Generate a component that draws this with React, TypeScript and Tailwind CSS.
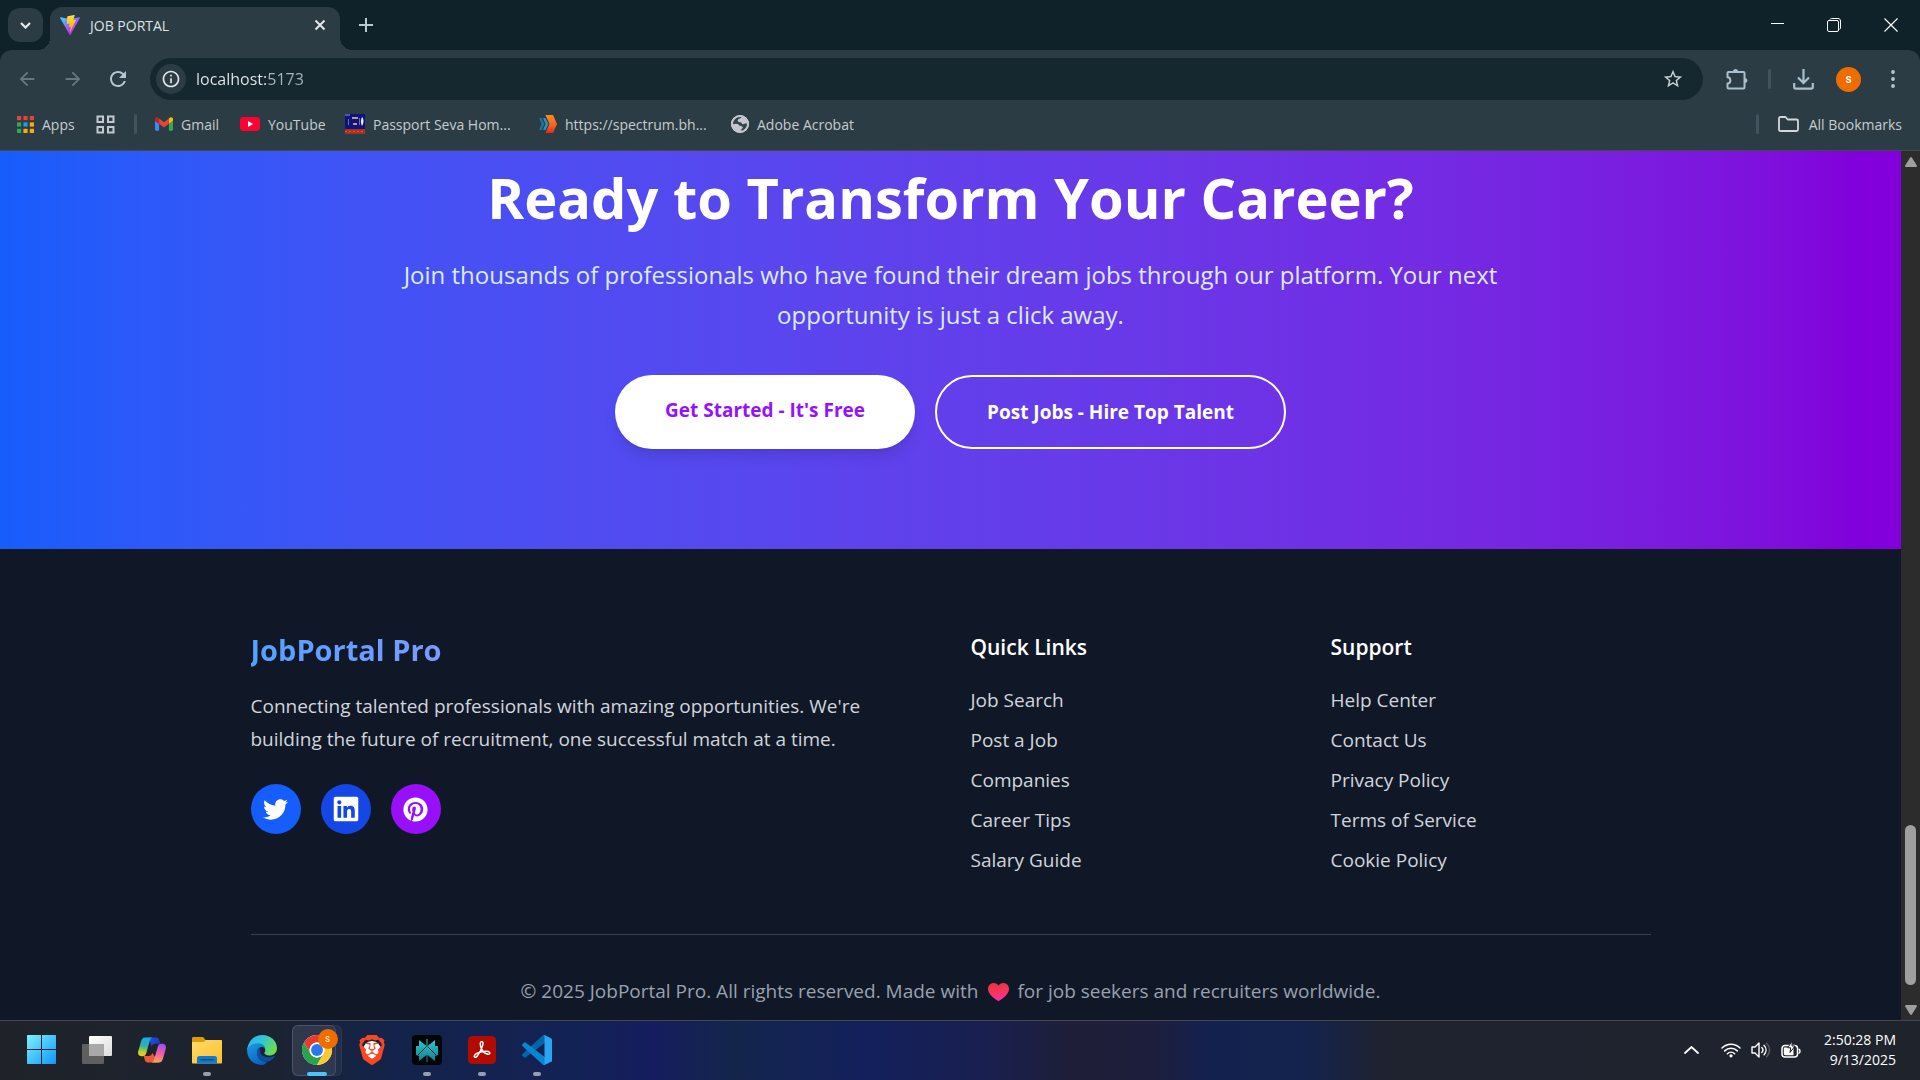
import type { ReactNode } from "react";
import { FaTwitter, FaLinkedin, FaPinterest } from "react-icons/fa";
import { MdArrowBack, MdArrowForward, MdRefresh, MdOutlineInfo, MdStarBorder } from "react-icons/md";
import { SiBrave } from "react-icons/si";

/* ---------- Browser icons ---------- */

function ViteLogo() {
  return (
    <svg className="size-5" viewBox="0 0 256 257" aria-hidden="true">
      <defs>
        <linearGradient id="viteA" x1="-.828%" x2="57.636%" y1="7.652%" y2="78.411%">
          <stop offset="0%" stopColor="#41D1FF" />
          <stop offset="100%" stopColor="#BD34FE" />
        </linearGradient>
        <linearGradient id="viteB" x1="43.376%" x2="50.316%" y1="2.242%" y2="89.03%">
          <stop offset="0%" stopColor="#FFEA83" />
          <stop offset="8.333%" stopColor="#FFDD35" />
          <stop offset="100%" stopColor="#FFA800" />
        </linearGradient>
      </defs>
      <path fill="url(#viteA)" d="M255.153 37.938L134.897 252.976c-2.483 4.44-8.862 4.466-11.382.048L.875 37.958c-2.746-4.814 1.371-10.646 6.827-9.67l120.385 21.517a6.537 6.537 0 0 0 2.322-.004l117.867-21.483c5.438-.991 9.574 4.796 6.877 9.62Z" />
      <path fill="url(#viteB)" d="M185.432.063L96.44 17.501a3.268 3.268 0 0 0-2.634 3.014l-5.474 92.456a3.268 3.268 0 0 0 3.997 3.378l24.777-5.718c2.318-.535 4.413 1.507 3.936 3.838l-7.361 36.047c-.495 2.426 1.782 4.5 4.151 3.78l15.304-4.649c2.372-.72 4.652 1.36 4.15 3.788l-11.698 56.621c-.732 3.542 3.979 5.473 5.943 2.437l1.313-2.028l72.516-144.72c1.215-2.423-.88-5.186-3.54-4.672l-25.505 4.922c-2.396.462-4.435-1.77-3.759-4.114l16.646-57.705c.677-2.35-1.37-4.583-3.769-4.113Z" />
    </svg>
  );
}

function AppsIcon() {
  const colors = ["#ea4335", "#ea4335", "#ea4335", "#34a853", "#1a9cf0", "#fbab05", "#34a853", "#fbab05", "#fbab05"];
  return (
    <svg className="size-[17px]" viewBox="0 0 17 17" aria-hidden="true">
      {colors.map((c, i) => (
        <rect key={i} x={(i % 3) * 6.4} y={Math.floor(i / 3) * 6.4} width="4.2" height="4.2" fill={c} />
      ))}
    </svg>
  );
}

function TabGroupsIcon() {
  return (
    <svg className="size-[19px]" viewBox="0 0 19 19" fill="none" stroke="#c3c9cc" strokeWidth="2" aria-hidden="true">
      <rect x="1.5" y="1.5" width="5.5" height="5.5" />
      <rect x="12" y="1.5" width="5.5" height="5.5" />
      <rect x="1.5" y="12" width="5.5" height="5.5" />
      <rect x="12" y="12" width="5.5" height="5.5" />
    </svg>
  );
}

function GmailIcon() {
  return (
    <svg className="h-[14px] w-[18px]" viewBox="52 42 88 66" aria-hidden="true">
      <path fill="#4285f4" d="M58 108h14V74L52 59v43c0 3.32 2.69 6 6 6" />
      <path fill="#34a853" d="M120 108h14c3.32 0 6-2.69 6-6V59l-20 15" />
      <path fill="#fbbc04" d="M120 48v26l20-15v-8c0-7.42-8.47-11.65-14.4-7.2" />
      <path fill="#ea4335" d="M72 74V48l24 18 24-18v26L96 92" />
      <path fill="#c5221f" d="M52 51v8l20 15V48l-5.6-4.2c-5.94-4.45-14.4-.22-14.4 7.2" />
    </svg>
  );
}

function YouTubeIcon() {
  return (
    <svg className="h-[14px] w-5" viewBox="0 0 20 14" aria-hidden="true">
      <rect width="20" height="14" rx="3.4" fill="#ff0033" />
      <path d="M8 4v6l5-3z" fill="#fff" />
    </svg>
  );
}

function PassportIcon() {
  return (
    <svg className="size-5" viewBox="0 0 20 20" aria-hidden="true">
      <rect width="20" height="15" fill="#12127a" />
      <rect y="15" width="20" height="5" fill="#a8321d" />
      <path d="M0 0h5v2H0z" fill="#4b57a0" />
      <path d="M7 3h6v2H7zM8 9h4v2H8z" fill="#a9a488" />
      <path d="M3 5h1v6H3zM14 4h1v7h-1z" fill="#6a70b8" />
      <path d="M17 3c2 2 2 6 0 9-1.500-3-1.500-6 0-9z" fill="#d8f0fa" />
      <path d="M0 17.500h20" stroke="#d65a35" strokeDasharray="2 2" />
    </svg>
  );
}

function SpectrumIcon() {
  return (
    <svg className="size-[18px]" viewBox="0 0 18 18" aria-hidden="true">
      <defs>
        <linearGradient id="spec" x1="0" y1="0" x2="0" y2="1">
          <stop offset="0" stopColor="#fb8c1d" />
          <stop offset=".6" stopColor="#f9601c" />
          <stop offset="1" stopColor="#e8261d" />
        </linearGradient>
      </defs>
      <path d="M0 3h2.500l3 6-3 6H0l2.500-6z" fill="#1f6f9f" />
      <path d="M4 3h2.500l3 6-3 6H4l2.500-6z" fill="#2a8fc4" />
      <path d="M6.500 0H14l4 9-4 9H6.500l4-9z" fill="url(#spec)" />
    </svg>
  );
}

function GlobeIcon() {
  return (
    <svg className="size-[18px]" viewBox="0 0 18 18" aria-hidden="true">
      <circle cx="9" cy="9" r="9" fill="#c3c7cd" />
      <path d="M10.500 2c-1 2-3.800 1.600-3.800 3.600 0 1.200 1 1.600 2.600 1.700 1.600.1 1.200 2 2.700 2s1.800-1 4-.6c0 3.600-2.400 6-5.200 7.100-1.300-.8-.3-1.900.5-2.400 1-.7.400-2.100-.7-2.200-1.700-.2-2-.6-3.100-1.700C6 8.100 3.500 8.700 2 9.200 1.900 4.800 5.700 1.200 10.500 2z" fill="#2b3c44" opacity=".95" />
      <path d="M2.500 9.500C5 9 7 9 7.200 10.900c.2 1.600 1.600 1.300 1.600 2.600 0 1-.6 1.700-.8 2.400C4.800 15.600 2.600 12.800 2.500 9.500z" fill="#c3c7cd" />
      <circle cx="9" cy="9" r="8.200" fill="none" stroke="#c3c7cd" strokeWidth="1.600" />
    </svg>
  );
}

function FolderOutlineIcon() {
  return (
    <svg className="h-4 w-[21px]" viewBox="0 0 21 16" fill="none" stroke="#d3d7d9" strokeWidth="1.800" strokeLinejoin="round" aria-hidden="true">
      <path d="M1 2.500C1 1.600 1.600 1 2.500 1h5l2.200 2.500h8.800c.9 0 1.500.6 1.500 1.500v8.500c0 .9-.6 1.500-1.500 1.500h-16C1.600 15 1 14.400 1 13.500z" />
    </svg>
  );
}

function PuzzleIcon() {
  return (
    <svg className="h-[21px] w-[22px]" viewBox="0 0 22 21" aria-hidden="true">
      <path d="M2.500 3h15c.6 0 1 .4 1 1v14.500c0 .6-.4 1-1 1h-15c-.6 0-1-.4-1-1v-4c3.800-.2 3.800-6 0-6.200V4c0-.6.4-1 1-1z" fill="none" stroke="#a9c0cd" strokeWidth="2" strokeLinejoin="round" />
      <path d="M7 2.500a2.500 2.500 0 0 1 5 0zM19 9a2.500 2.500 0 0 1 0 5z" fill="#a9c0cd" />
    </svg>
  );
}

function DownloadIcon() {
  return (
    <svg className="h-[21px] w-[21px]" viewBox="0 0 21 21" fill="none" stroke="#a9c0cd" strokeWidth="2.200" aria-hidden="true">
      <path d="M10.500 0v13.500M5 8.500l5.500 5.500L16 8.500" />
      <path d="M1.200 14v4c0 .9.600 1.600 1.500 1.600h15.600c.9 0 1.500-.7 1.500-1.600v-4" strokeLinejoin="round" />
    </svg>
  );
}

/* ---------- Taskbar icons ---------- */

function WindowsIcon() {
  return (
    <svg className="size-[30px]" viewBox="0 0 30 30" aria-hidden="true">
      <defs>
        <linearGradient id="win" gradientUnits="userSpaceOnUse" x1="0" y1="0" x2="30" y2="30">
          <stop offset="0" stopColor="#7df0ff" />
          <stop offset="1" stopColor="#0a94f8" />
        </linearGradient>
      </defs>
      <path fill="url(#win)" d="M.5 0H14v14H0V.5zM15 0h13.500l.5.500V14H15zM0 15h14v14H.5l-.5-.5zM15 15h14v13.500l-.5.500H15z" />
    </svg>
  );
}

function TaskViewIcon() {
  return (
    <svg className="size-[30px]" viewBox="0 0 30 30" aria-hidden="true">
      <defs>
        <linearGradient id="tv" x1="0" y1="0" x2="1" y2="1">
          <stop offset="0" stopColor="#fff" />
          <stop offset="1" stopColor="#dcdcdc" />
        </linearGradient>
      </defs>
      <rect x="0" y="9" width="22" height="20" rx="1" fill="#5f5f60" />
      <rect x="7" y="1" width="23" height="20" rx="1" fill="url(#tv)" />
      <path d="M7 9h15v12H8a1 1 0 0 1-1-1z" fill="#a8a8a8" />
    </svg>
  );
}

function CopilotIcon() {
  return (
    <svg className="size-[30px]" viewBox="0 0 30 30" aria-hidden="true">
      <defs>
        <linearGradient id="cpA" x1="0.400" y1="0" x2="0.300" y2="1">
          <stop offset="0" stopColor="#1ea7ee" />
          <stop offset=".45" stopColor="#30b3a0" />
          <stop offset=".8" stopColor="#c9cf2a" />
          <stop offset="1" stopColor="#f5c515" />
        </linearGradient>
        <linearGradient id="cpB" x1="0.600" y1="0" x2="0.400" y2="1">
          <stop offset="0" stopColor="#a04df0" />
          <stop offset=".5" stopColor="#ee5fa5" />
          <stop offset="1" stopColor="#fba25a" />
        </linearGradient>
        <linearGradient id="cpC" x1="0" y1="0" x2="1" y2="0.500">
          <stop offset="0" stopColor="#1b62e0" />
          <stop offset="1" stopColor="#2135c9" />
        </linearGradient>
      </defs>
      <path d="M8 2.500h11c2 0 2.800 1.200 3.300 3l1 3.200h-5c-2 0-3 1-3.600 3L12 3z" fill="url(#cpC)" />
      <path d="M22 27.500H11c-2 0-2.800-1.200-3.300-3L6.800 21h4.900c2 0 3-1 3.600-3z" fill="#ee5a37" />
      <path d="M8.200 2.500h7.300c-1.700.6-2.300 2-2.800 3.800l-3.500 12c-.5 1.900-1.500 2.900-3.300 2.900H4.600C1.700 21.200.5 19 1.300 16L4 6.500c.7-2.500 1.900-4 4.200-4z" fill="url(#cpA)" />
      <path d="M21.800 27.500h-7.300c1.700-.6 2.300-2 2.800-3.800l3.500-12c.5-1.900 1.500-2.900 3.300-2.900h1.300c2.900 0 4.100 2.200 3.300 5.200L26 23.500c-.7 2.500-1.900 4-4.200 4z" fill="url(#cpB)" />
    </svg>
  );
}

function ExplorerIcon() {
  return (
    <svg className="size-[30px]" viewBox="0 0 30 30" aria-hidden="true">
      <defs>
        <linearGradient id="exp" x1="0" y1="0" x2="1" y2="1">
          <stop offset="0" stopColor="#ffdc6b" />
          <stop offset="1" stopColor="#fcbf2a" />
        </linearGradient>
      </defs>
      <path d="M0 3.500C0 2.500.7 2 1.500 2H10c1 0 1.500.3 2 1l1.500 2V12H0z" fill="#e09a07" />
      <path d="M0 7h10.500c1.200 0 1.700-.3 2.500-1.200L13.500 5H29c.6 0 1 .4 1 1v21.500c0 .6-.4 1-1 1H1c-.6 0-1-.4-1-1z" fill="url(#exp)" />
      <path d="M5 23.500c0-1.500.8-2.500 2.500-2.500h15c1.700 0 2.500 1 2.500 2.500v5H5z" fill="#127bd0" />
      <rect x="8" y="24" width="14" height="1.500" rx=".7" fill="#0b4f92" />
    </svg>
  );
}

function EdgeIcon() {
  return (
    <svg className="size-[30px]" viewBox="0 0 256 256" aria-hidden="true">
      <defs>
        <linearGradient id="edA" x1="0" y1="0" x2="1" y2=".5">
          <stop offset="0" stopColor="#2bb0f0" />
          <stop offset=".5" stopColor="#2fc5d6" />
          <stop offset="1" stopColor="#6bdc50" />
        </linearGradient>
        <linearGradient id="edB" x1="0" y1="0" x2=".6" y2="1">
          <stop offset="0" stopColor="#1b9de2" />
          <stop offset="1" stopColor="#0a60c0" />
        </linearGradient>
      </defs>
      <path d="M128 0c72 0 128 50 128 112 0 38-28 62-66 62-28 0-42-10-42-20 0-7 8-9 8-26 0-24-24-44-58-44-44 0-80 24-98 48C8 56 58 0 128 0z" fill="url(#edA)" />
      <path d="M2 118c16-28 50-48 92-48 36 0 62 20 62 52 0-10-14-22-32-20-26 3-46 30-36 68 12 42 54 64 84 60-14 18-30 26-48 26C54 256-6 196 2 118z" fill="url(#edB)" />
      <path d="M106 106c-24 18-28 52-10 82 24 40 72 50 104 32 16-9 28-22 36-34 4-6-1-9-6-7-52 22-112 6-118-34-2-16 0-30-6-39z" fill="#0c4ea3" />
    </svg>
  );
}

function ChromeIcon() {
  return (
    <svg className="size-[30px]" viewBox="0 0 48 48" aria-hidden="true">
      <circle cx="24" cy="24" r="24" fill="#fff" />
      <path d="M3.220 36A24 24 0 0 0 24 48l10.390-18A12 12 0 0 1 13.610 30L3.220 12A24 24 0 0 0 3.220 36z" fill="#2ba24c" />
      <path d="M24 48A24 24 0 0 0 44.780 12H24a12 12 0 0 1 10.390 18z" fill="#fcc934" />
      <path d="M44.780 12A24 24 0 0 0 3.220 12l10.390 18A12 12 0 0 1 24 12z" fill="#e33b2e" />
      <circle cx="24" cy="24" r="12" fill="#fff" />
      <circle cx="24" cy="24" r="9.500" fill="#2a78ee" />
    </svg>
  );
}

function BraveIcon() {
  return (
    <span className="relative flex size-[30px] items-center justify-center">
      <span className="absolute size-[18px] rounded-full bg-white" />
      <SiBrave className="relative size-[30px] text-[#fb4620]" />
    </span>
  );
}

function PerplexityIcon() {
  return (
    <svg className="size-[30px]" viewBox="0 0 30 30" aria-hidden="true">
      <defs>
        <linearGradient id="px" x1="0" y1="0" x2="0" y2="1">
          <stop offset="0" stopColor="#2fc8d2" />
          <stop offset="1" stopColor="#127f8b" />
        </linearGradient>
      </defs>
      <rect width="30" height="30" rx="4" fill="#030506" />
      <path d="M7 5l7.500 6V4h1v7L23 5v6h3v9l-3 1v5l-7.500-6v7h-1v-7L7 26v-5l-3-1v-9h3z" fill="url(#px)" />
      <path d="M14.500 11.500L6 20M15.500 11.500L24 20" stroke="#062a30" strokeWidth="1" fill="none" />
    </svg>
  );
}

function AcrobatIcon() {
  return (
    <svg className="size-7" viewBox="0 0 28 28" aria-hidden="true">
      <rect width="28" height="28" rx="4.500" fill="#b30b00" />
      <path d="M12.600 6.300c1.300-1.600 2.900-.2 2.300 2.200-.9 3.900-3.300 8.800-5.800 11.700-1.300 1.600-3.400 1.100-2.700-.5.9-2 4.800-3.500 8.500-4.100 2.700-.4 5.800-.3 6.700.8.900 1.200-.6 2.200-2.600 1.600-2.800-.8-5.400-4-6.400-7.700-.4-1.700-.6-3.200 0-4z" fill="none" stroke="#fff" strokeWidth="1.500" strokeLinejoin="round" />
    </svg>
  );
}

function VsCodeIcon() {
  return (
    <svg className="size-[30px]" viewBox="0 0 100 100" aria-hidden="true">
      <path d="M96.500 10.600L75.900.7c-2.400-1.200-5.200-.7-7.100 1.200L1.300 63.400c-1.800 1.700-1.800 4.500 0 6.100l5.500 5c1.500 1.400 3.700 1.500 5.300.2l81.200-61.600c2.700-2.100 6.600-.1 6.600 3.300v-.2c0-2.400-1.400-4.600-3.400-5.600z" fill="#0065a9" />
      <path d="M96.500 89.400l-20.600 9.900c-2.400 1.200-5.200.7-7.100-1.200L1.300 36.600c-1.800-1.700-1.800-4.500 0-6.100l5.500-5c1.500-1.400 3.700-1.500 5.300-.2l81.200 61.600c2.700 2.100 6.600.1 6.600-3.300v.2c0 2.400-1.400 4.600-3.400 5.600z" fill="#0a85d1" />
      <path d="M75.900 99.300c-2.400 1.200-5.200.7-7.100-1.200 2.300 2.300 6.200.7 6.200-2.600V4.500c0-3.300-3.900-4.900-6.200-2.600 1.900-1.900 4.700-2.400 7.100-1.200l20.600 9.900c2.200 1 3.500 3.200 3.500 5.600v67.600c0 2.400-1.400 4.600-3.500 5.600z" fill="#2aa5f2" />
    </svg>
  );
}

function WifiIcon() {
  return (
    <svg className="h-4 w-5" viewBox="0 0 20 16" fill="none" stroke="#fff" strokeWidth="1.500" strokeLinecap="round" aria-hidden="true">
      <path d="M1 6a12.700 12.700 0 0 1 18 0M3.700 8.900a9 9 0 0 1 12.600 0M6.400 11.700a5.200 5.200 0 0 1 7.200 0" />
      <circle cx="10" cy="13.800" r="1.600" fill="#fff" stroke="none" />
    </svg>
  );
}

function SpeakerIcon() {
  return (
    <svg className="h-[18px] w-5" viewBox="0 0 20 18" fill="none" stroke="#fff" strokeWidth="1.400" strokeLinecap="round" strokeLinejoin="round" aria-hidden="true">
      <path d="M1 6h3l4-4v14l-4-4H1z" />
      <path d="M10.800 6.500c1.400 1.500 1.400 3.500 0 5M13 4.300c2.700 2.800 2.700 6.600 0 9.400" />
      <path d="M15.600 2.300c4 4 4 9.400 0 13.400" stroke="#5a5f66" />
    </svg>
  );
}

function BatteryIcon() {
  return (
    <svg className="h-[18px] w-5" viewBox="0 0 20 18" aria-hidden="true">
      <rect x="1" y="4.500" width="15.500" height="11.500" rx="3" fill="none" stroke="#fff" strokeWidth="1.500" />
      <path d="M17.500 8c1.300.2 1.500 1 1.500 2.200s-.2 2-1.500 2.200" stroke="#fff" strokeWidth="1.500" fill="none" />
      <path d="M2.800 6.500h9.700v7.800H4.500c-1 0-1.700-.7-1.700-1.700z" fill="#fff" />
      <path d="M11 0L6.800 6.800h2.900L9 11.500 14 5h-3z" fill="#fff" stroke="#1e232b" strokeWidth="1" strokeLinejoin="round" />
    </svg>
  );
}

function HeartIcon() {
  return (
    <svg className="mr-2 ml-2.5 inline-block h-[18px] w-[21px] align-[-3px]" viewBox="0 0 21 18" role="img" aria-label="love">
      <defs>
        <linearGradient id="heart" x1="0.300" y1="0" x2="0.500" y2="1">
          <stop offset="0" stopColor="#e0373f" />
          <stop offset=".5" stopColor="#f7345c" />
          <stop offset="1" stopColor="#fb2fa8" />
        </linearGradient>
      </defs>
      <path d="M10.500 2.500C12 .7 13.600 0 15.300 0 18.500 0 21 2.500 21 5.800c0 4.700-4.600 8.700-9.300 11.800-.8.500-1.600.5-2.400 0C4.600 14.500 0 10.500 0 5.800 0 2.500 2.500 0 5.700 0c1.700 0 3.300.7 4.800 2.500z" fill="url(#heart)" />
    </svg>
  );
}

/* ---------- Browser window ---------- */

function TabStrip() {
  return (
    <div className="flex h-[50px] items-center bg-[#0f2229] pl-2">
      <button aria-label="Search tabs" className="flex h-[34px] w-[35px] items-center justify-center rounded-xl bg-[#2b3c44]">
        <svg className="h-[7px] w-[11px]" viewBox="0 0 11 7" fill="none" stroke="#e6eaec" strokeWidth="2.200" aria-hidden="true">
          <path d="M1 1l4.500 4.500L10 1" />
        </svg>
      </button>
      <div className="relative ml-[7px] flex h-[43px] w-[290px] items-center self-end rounded-t-xl bg-[#2b3c44] pr-3.5 pb-[7px] pl-2.5">
        <span className="absolute bottom-0 -left-3 size-3 bg-[radial-gradient(circle_at_top_left,transparent_12px,#2b3c44_12px)]" />
        <span className="absolute -right-3 bottom-0 size-3 bg-[radial-gradient(circle_at_top_right,transparent_12px,#2b3c44_12px)]" />
        <ViteLogo />
        <span className="ml-2.5 flex-1 text-[14px] text-[#dfe3e5]">JOB PORTAL</span>
        <button aria-label="Close tab" className="flex size-3 items-center justify-center">
          <svg className="size-3" viewBox="0 0 12 12" stroke="#e6eaec" strokeWidth="1.900" aria-hidden="true">
            <path d="M1.500 1.500l9 9M10.500 1.500l-9 9" />
          </svg>
        </button>
      </div>
      <button aria-label="New tab" className="ml-[19px] flex size-[14px] items-center justify-center">
        <svg className="size-[14px]" viewBox="0 0 14 14" stroke="#b9c9d2" strokeWidth="2" aria-hidden="true">
          <path d="M7 0v14M0 7h14" />
        </svg>
      </button>
      <div className="ml-auto flex items-center gap-[43px] pr-[22px] text-white">
        <button aria-label="Minimize" className="flex h-[15px] w-[13px] items-start pt-[5px]">
          <svg className="h-px w-[13px]" viewBox="0 0 13 1" aria-hidden="true">
            <rect width="13" height="1" fill="#fff" />
          </svg>
        </button>
        <button aria-label="Restore" className="flex size-[14px] items-center">
          <svg className="size-[14px]" viewBox="0 0 14 14" fill="none" stroke="#fff" aria-hidden="true">
            <path d="M3 1.500C3.300.8 3.800.5 4.500.5H11c1.500 0 2.500 1 2.500 2.500v7c0 .6-.3 1.100-1 1.300" />
            <rect x=".5" y="2.500" width="11" height="11" rx="1.500" />
          </svg>
        </button>
        <button aria-label="Close" className="flex size-[14px] items-center">
          <svg className="size-[14px]" viewBox="0 0 14 14" stroke="#fff" strokeWidth="1.200" aria-hidden="true">
            <path d="M.5.5l13 13M13.500.5l-13 13" />
          </svg>
        </button>
      </div>
    </div>
  );
}

function Toolbar() {
  return (
    <div className="flex h-[58px] items-center pr-[18px] pl-4">
      <button aria-label="Back" className="mr-7 text-[#68777f]">
        <MdArrowBack className="size-[22px]" />
      </button>
      <button aria-label="Forward" className="mr-[22px] -ml-1 text-[#68777f]">
        <MdArrowForward className="size-[22px]" />
      </button>
      <button aria-label="Reload" className="mr-5 text-[#b4c7d1]">
        <MdRefresh className="size-6" />
      </button>
      <div className="flex h-[42px] flex-1 items-center rounded-full bg-[#15272f] pr-[19px] pl-1.5">
        <button aria-label="View site information" className="flex size-[30px] items-center justify-center rounded-full bg-[#2b3c44] text-[#e3e7e9]">
          <MdOutlineInfo className="size-5" />
        </button>
        <input
          aria-label="Address"
          defaultValue="localhost:5173"
          className="ml-2.5 min-w-0 flex-1 bg-[linear-gradient(90deg,#e8eaed_72px,#aab8bf_72px)] bg-clip-text text-[16px] text-transparent outline-none"
        />
        <button aria-label="Bookmark this tab" className="text-[#c9d1d5]">
          <MdStarBorder className="size-[22px]" />
        </button>
      </div>
      <button aria-label="Extensions" className="ml-[23px]">
        <PuzzleIcon />
      </button>
      <span className="ml-[20px] h-5 w-[3px] rounded-full bg-[#41535c]" />
      <button aria-label="Downloads" className="ml-[22px]">
        <DownloadIcon />
      </button>
      <button aria-label="Profile" className="ml-[22px] flex size-[25px] items-center justify-center rounded-full bg-[#ef6c00] font-['Roboto',sans-serif] text-[12px] font-medium text-white">
        s
      </button>
      <button aria-label="Menu" className="ml-[23px] flex w-[18px] justify-center">
        <svg className="h-[18px] w-1" viewBox="0 0 4 18" fill="#b4c7d1" aria-hidden="true">
          <circle cx="2" cy="2" r="1.900" />
          <circle cx="2" cy="9" r="1.900" />
          <circle cx="2" cy="16" r="1.900" />
        </svg>
      </button>
    </div>
  );
}

function Bookmark({ icon, label, className }: { icon: ReactNode; label: string; className: string }) {
  return (
    <a href="#" className={`flex shrink-0 items-center gap-2 ${className}`}>
      {icon}
      {label}
    </a>
  );
}

function BookmarksBar() {
  return (
    <nav aria-label="Bookmarks" className="flex h-[43px] items-center border-b border-[#45494b] pr-[18px] pb-2.5 pl-[17px] text-[14px] text-[#c6ccd0]">
      <Bookmark icon={<AppsIcon />} label="Apps" className="w-[79px]" />
      <a href="#" aria-label="Tab groups">
        <TabGroupsIcon />
      </a>
      <span className="mr-[18px] ml-[19px] h-5 w-[3px] rounded-full bg-[#41535c]" />
      <Bookmark icon={<GmailIcon />} label="Gmail" className="w-[85px]" />
      <Bookmark icon={<YouTubeIcon />} label="YouTube" className="w-[105px]" />
      <Bookmark icon={<PassportIcon />} label="Passport Seva Hom..." className="w-[194px]" />
      <Bookmark icon={<SpectrumIcon />} label="https://spectrum.bh..." className="w-[192px]" />
      <Bookmark icon={<GlobeIcon />} label="Adobe Acrobat" className="w-[130px]" />
      <span className="ml-auto h-5 w-[3px] rounded-full bg-[#41535c]" />
      <a href="#" className="ml-[19px] flex items-center gap-2.5">
        <FolderOutlineIcon />
        All Bookmarks
      </a>
    </nav>
  );
}

/* ---------- Web page ---------- */

function CallToAction() {
  return (
    <section className="bg-linear-to-r from-blue-600 to-purple-700 pt-4 pb-[100px] text-center">
      <h2 className="text-[56px] leading-[60px] font-bold text-white">Ready to Transform Your Career?</h2>
      <p className="mx-auto mt-7 max-w-[1120px] text-[24px] leading-10 text-blue-100">
        Join thousands of professionals who have found their dream jobs through our platform. Your next opportunity is just a click away.
      </p>
      <div className="mt-10 flex justify-center gap-5 text-[19px] leading-[30px] font-bold">
        <a href="#" className="rounded-full bg-white px-[50px] pt-5 pb-5 text-purple-600 shadow-lg">
          Get Started - It's Free
        </a>
        <a href="#" className="rounded-full border-2 border-white px-[50px] py-5 text-white">
          Post Jobs - Hire Top Talent
        </a>
      </div>
    </section>
  );
}

function LinkColumn({ title, links }: { title: string; links: string[] }) {
  return (
    <div>
      <h4 className="text-[21px] leading-[35px] font-semibold text-white">{title}</h4>
      <ul className="mt-5 space-y-2.5 text-[19px] leading-[30px] text-gray-300">
        {links.map((link) => (
          <li key={link}>
            <a href="#">{link}</a>
          </li>
        ))}
      </ul>
    </div>
  );
}

function Footer() {
  return (
    <footer className="flex-1 bg-gray-900 px-10 pt-[81px] pb-10">
      <div className="mx-auto max-w-[1400px]">
        <div className="grid grid-cols-4 gap-10">
          <div className="col-span-2">
            <h3 className="bg-linear-to-r from-blue-400 to-purple-400 bg-clip-text text-[29px] leading-10 font-bold text-transparent">
              JobPortal Pro
            </h3>
            <p className="mt-5 max-w-[640px] text-[19px] leading-[33px] text-gray-300">
              Connecting talented professionals with amazing opportunities. We're building the future of recruitment, one successful match at a time.
            </p>
            <div className="mt-7 flex gap-5 text-white">
              <a href="#" aria-label="Twitter" className="flex size-[50px] items-center justify-center rounded-full bg-blue-600">
                <FaTwitter className="size-[25px]" />
              </a>
              <a href="#" aria-label="LinkedIn" className="flex size-[50px] items-center justify-center rounded-full bg-blue-700">
                <FaLinkedin className="size-7" />
              </a>
              <a href="#" aria-label="Pinterest" className="flex size-[50px] items-center justify-center rounded-full bg-purple-600">
                <FaPinterest className="size-[25px]" />
              </a>
            </div>
          </div>
          <LinkColumn title="Quick Links" links={["Job Search", "Post a Job", "Companies", "Career Tips", "Salary Guide"]} />
          <LinkColumn title="Support" links={["Help Center", "Contact Us", "Privacy Policy", "Terms of Service", "Cookie Policy"]} />
        </div>
        <div className="mt-[59px] border-t border-gray-700 pt-[41px] text-center text-[19px] leading-[30px] text-gray-400">
          © 2025 JobPortal Pro. All rights reserved. Made with
          <HeartIcon />
          for job seekers and recruiters worldwide.
        </div>
      </div>
    </footer>
  );
}

function ScrollBar() {
  return (
    <div aria-hidden="true" className="flex w-[19px] shrink-0 flex-col items-center bg-[#2c2c2c] pt-1.5 pb-[5px]">
      <svg className="h-[10px] w-3" viewBox="0 0 12 10" fill="#9f9f9f">
        <path d="M5 .7c.5-.8 1.500-.8 2 0l4.700 7.500c.5.900 0 1.800-1 1.800H1.300c-1 0-1.500-.9-1-1.800z" />
      </svg>
      <div className="flex-1" />
      <div className="mb-5 h-40 w-[11px] rounded-full bg-[#9f9f9f]" />
      <svg className="h-[10px] w-3" viewBox="0 0 12 10" fill="#9f9f9f">
        <path d="M5 9.300c.5.800 1.500.8 2 0l4.700-7.500c.5-.9 0-1.800-1-1.800H1.300c-1 0-1.500.9-1 1.800z" />
      </svg>
    </div>
  );
}

/* ---------- Taskbar ---------- */

function TaskButton({ label, running, children }: { label: string; running?: boolean; children: ReactNode }) {
  return (
    <button aria-label={label} className="relative flex h-[59px] w-[55px] items-center justify-center pb-0.5">
      {children}
      {running && <span className="absolute bottom-1 h-1 w-2 rounded-full bg-[#9a9dad]" />}
    </button>
  );
}

function Taskbar() {
  return (
    <div className="flex h-[60px] shrink-0 items-center border-t border-[#44474f] bg-[linear-gradient(90deg,#1f2329_0%,#1c2330_14%,#13234a_20%,#132255_30%,#151d5e_34%,#14254c_38%,#13205c_45%,#191f50_51%,#1e1e38_56%,#1d1e3c_60%,#13214f_63%,#14234d_68%,#1f2330_72%,#1f232c_100%)] pr-6 pl-[14px]">
      <TaskButton label="Start"><WindowsIcon /></TaskButton>
      <TaskButton label="Task view"><TaskViewIcon /></TaskButton>
      <TaskButton label="Copilot"><CopilotIcon /></TaskButton>
      <TaskButton label="File Explorer" running><ExplorerIcon /></TaskButton>
      <TaskButton label="Edge"><EdgeIcon /></TaskButton>
      <button aria-label="Chrome" className="relative flex h-[59px] w-[55px] items-center justify-center pb-0.5">
        <span className="absolute inset-y-1 left-[3px] w-[50px] rounded-md border border-white/5 bg-white/5" />
        <span className="absolute inset-y-1 left-[3px] w-11 rounded-md border border-white/10 bg-white/5" />
        <span className="relative">
          <ChromeIcon />
          <span className="absolute -top-1.5 left-4 flex size-5 items-center justify-center rounded-full bg-[#ef6c00] font-['Roboto',sans-serif] text-[10px] leading-none font-medium text-[#ffd9b8]">
            s
          </span>
        </span>
        <span className="absolute bottom-1 h-1 w-5 rounded-full bg-[#4cc2ff]" />
      </button>
      <TaskButton label="Brave"><BraveIcon /></TaskButton>
      <TaskButton label="Perplexity" running><PerplexityIcon /></TaskButton>
      <TaskButton label="Acrobat" running><AcrobatIcon /></TaskButton>
      <TaskButton label="Visual Studio Code" running><VsCodeIcon /></TaskButton>
      <div className="ml-auto flex items-center pb-0.5 text-white">
        <button aria-label="Show hidden icons" className="mr-[22px]">
          <svg className="h-2 w-[15px]" viewBox="0 0 15 8" fill="none" stroke="#fff" strokeWidth="1.800" strokeLinecap="round" aria-hidden="true">
            <path d="M1 7l6.500-6L14 7" />
          </svg>
        </button>
        <button aria-label="Network, volume and battery" className="mr-[23px] flex items-center gap-2.5">
          <WifiIcon />
          <SpeakerIcon />
          <BatteryIcon />
        </button>
        <button className="text-right text-[14px] leading-5">
          2:50:28 PM
          <br />
          9/13/2025
        </button>
      </div>
    </div>
  );
}

export default function App() {
  return (
    <div className="flex h-screen flex-col overflow-hidden font-['Open_Sans',sans-serif]">
      <header className="shrink-0 bg-[#0f2229]">
        <TabStrip />
        <div className="rounded-t-xl bg-[#2b3c44]">
          <Toolbar />
          <BookmarksBar />
        </div>
      </header>
      <div className="flex min-h-0 flex-1">
        <main className="flex min-w-0 flex-1 flex-col overflow-hidden bg-gray-900">
          <CallToAction />
          <Footer />
        </main>
        <ScrollBar />
      </div>
      <Taskbar />
    </div>
  );
}
